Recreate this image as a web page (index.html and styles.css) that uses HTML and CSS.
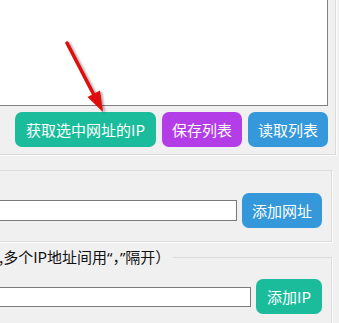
FILE: index.html
```html
<!DOCTYPE html>
<html lang="zh-CN">
<head>
<meta charset="utf-8">
<link rel="stylesheet" href="styles.css">
</head>
<body>
<div class="page">
  <div class="top">
    <div class="list"></div>
    <div class="btnrow">
      <button class="btn teal wide">获取选中网址的IP</button>
      <button class="btn purple">保存列表</button>
      <button class="btn blue">读取列表</button>
    </div>
  </div>
  <div class="group g1">
    <input class="field f1" type="text">
    <button class="btn blue">添加网址</button>
  </div>
  <fieldset class="group g2">
    <legend class="legend">,多个IP地址间用<span class="q">“</span>，<span class="q">”</span>隔开）</legend>
    <div class="grow">
      <input class="field f2" type="text">
      <button class="btn teal small">添加IP</button>
    </div>
  </fieldset>
</div>
<svg class="arrow" width="339" height="323" viewBox="0 0 339 323">
  <defs>
    <filter id="sh" x="-20%" y="-20%" width="140%" height="140%">
      <feGaussianBlur in="SourceAlpha" stdDeviation="1"/>
      <feOffset dx="2" dy="1" result="b"/>
      <feComponentTransfer><feFuncA type="linear" slope="0.35"/></feComponentTransfer>
      <feMerge><feMergeNode/><feMergeNode in="SourceGraphic"/></feMerge>
    </filter>
  </defs>
  <g filter="url(#sh)">
    <line x1="67" y1="43" x2="94.5" y2="96" stroke="#e00a0a" stroke-width="3.5" stroke-linecap="round"/>
    <polygon points="103,112 100,90.5 87.5,97" fill="#e00a0a"/>
  </g>
</svg>
</body>
</html>
```
FILE: styles.css
```css
html, body {
  margin: 0;
  padding: 0;
}
body {
  width: 339px;
  height: 323px;
  overflow: hidden;
  position: relative;
  background: #f0f0f0;
  font-family: "Noto Sans CJK SC", "Noto Sans", sans-serif;
}
.page {
  margin-left: -10px;
  margin-top: -10px;
  width: 349px;
}
.top {
  box-sizing: border-box;
  width: 347px;
  padding: 5px 8px 8px 5px;
  border-right: 1px solid #fdfdfd;
  border-bottom: 1px solid #fdfdfd;
  box-shadow: inset -1px -1px 0 #dadada;
}
.list {
  height: 111px;
  box-sizing: border-box;
  width: 333px;
  background: #fff;
  border: 1px solid #828282;
}
.btnrow {
  display: flex;
  justify-content: flex-end;
  gap: 6px;
  margin-top: 6px;
  width: 333px;
}
.btn {
  border: none;
  border-radius: 7px;
  height: 35px;
  width: 80px;
  padding: 0;
  color: #fff;
  font-family: "Noto Sans CJK SC", "Noto Sans", sans-serif;
  font-size: 15px;
  line-height: 35px;
  flex: none;
}
.btn.wide { width: 141px; }
.btn.small { width: 66px; }
.teal { background: #1abc9c; }
.purple { background: #b33ee8; }
.blue { background: #3498db; }
.group {
  box-sizing: border-box;
  width: 342px;
  border: 1px solid #dcdcdc;
  border-left: none;
  box-shadow: 1px 1px 0 #fcfcfc;
}
.g1 {
  margin-top: 14px;
  height: 72px;
  display: flex;
  align-items: center;
  justify-content: flex-end;
  gap: 5px;
  padding: 22px 9px 13px 0;
}
.field {
  box-sizing: border-box;
  border: 1px solid #7a7a7a;
  background: #fff;
  margin: 0;
  padding: 0;
  outline: none;
}
.f1 { width: 247px; height: 21px; }
.f2 { width: 261px; height: 20px; }
.g2 {
  margin: 7px 0 0 0;
  padding: 0 9px 20px 0;
  min-width: 0;
}
.legend {
  padding: 0 3px 0 0;
  margin-left: 9px;
  font-size: 15px;
  line-height: 16px;
  color: #111;
}
.q {
  font-family: "Noto Sans", sans-serif;
}
.grow {
  display: flex;
  align-items: center;
  justify-content: flex-end;
  gap: 5px;
  margin-top: 14px;
}
.arrow {
  position: absolute;
  left: 0;
  top: 0;
  pointer-events: none;
}
```
